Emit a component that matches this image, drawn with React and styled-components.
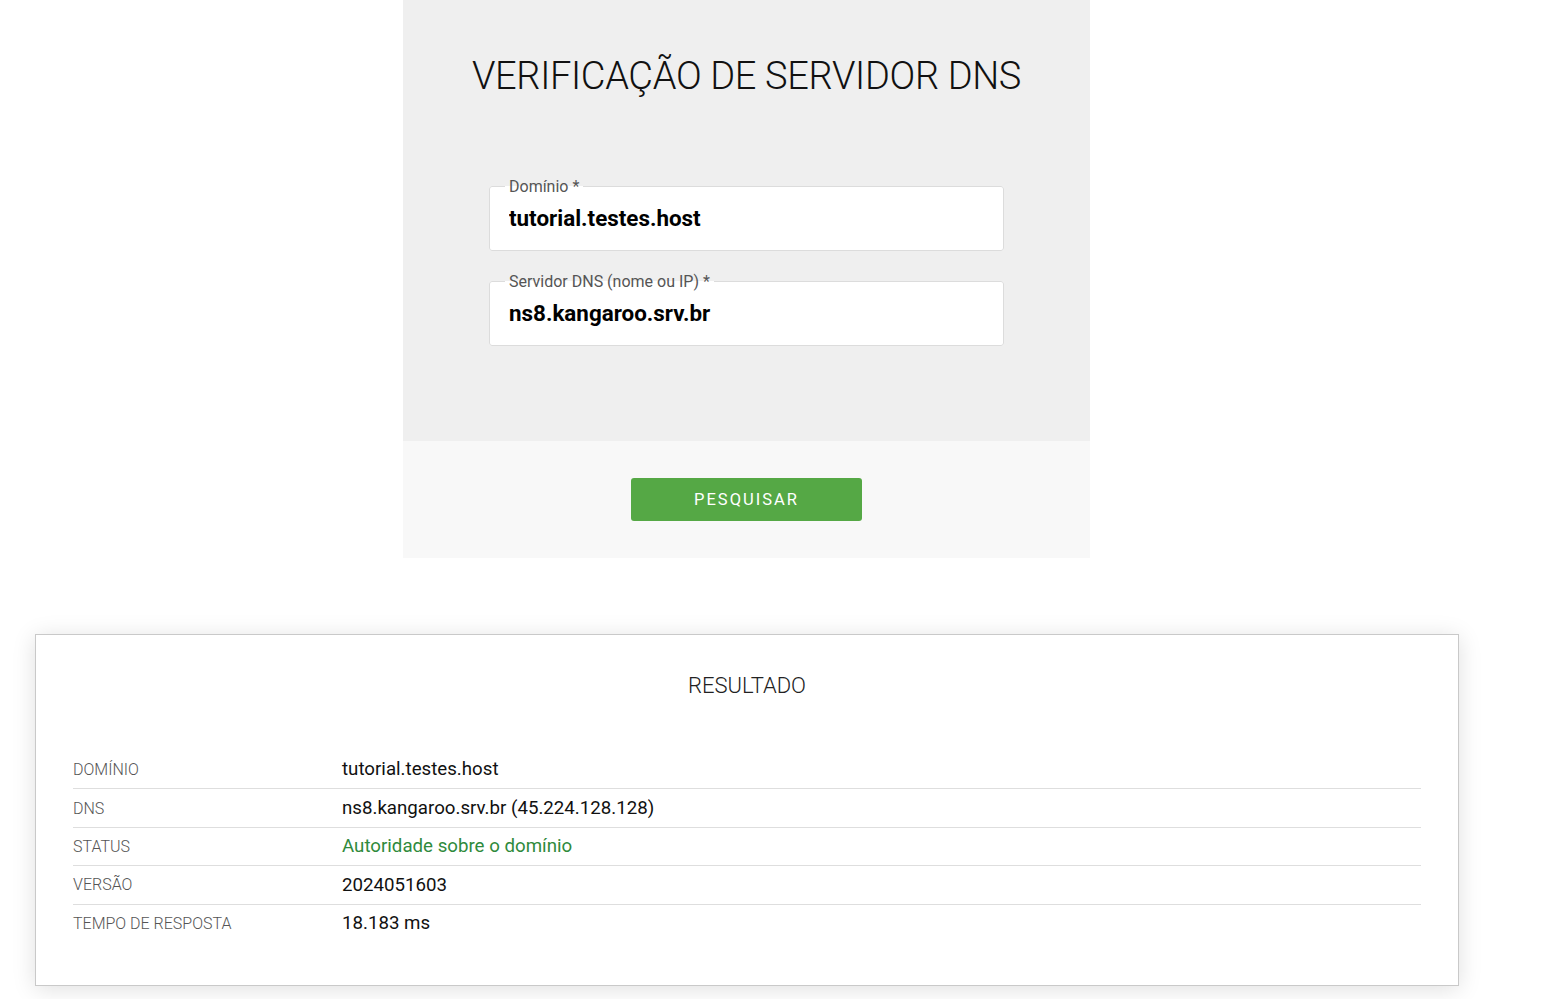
import React from "react";
import styled, { createGlobalStyle } from "styled-components";

const Global = createGlobalStyle`
  html, body { margin: 0; padding: 0; background: #fff; }
  body { font-family: Roboto, "Liberation Sans", Arial, sans-serif; color: #222; }
`;

const Page = styled.div`
  width: 1493px;
  display: flex;
  flex-direction: column;
  padding-bottom: 14px;
`;

const SearchPanel = styled.section`
  width: 687px;
  margin: 0 auto;
  display: flex;
  flex-direction: column;
`;

const FormArea = styled.div`
  background: #efefef;
  height: 441px;
  box-sizing: border-box;
  padding-top: 52px;
  display: flex;
  flex-direction: column;
  align-items: center;
`;

const Title = styled.h1`
  margin: 0 0 77px;
  font-size: 38px;
  font-weight: 300;
  line-height: 48px;
  text-align: center;
  color: #111;
  letter-spacing: -0.33px;
  white-space: nowrap;
`;

const Field = styled.fieldset`
  margin: 0 0 21px;
  padding: 0 20px 0 19px;
  width: 515px;
  height: 74px;
  box-sizing: border-box;
  border: 1px solid #dcdcdc;
  border-radius: 3px;
  background: #fff;
  min-width: 0;
`;

const Legend = styled.legend`
  padding: 0 4px;
  margin-left: -4px;
  font-size: 16px;
  line-height: 19px;
  color: #555;
`;

const Input = styled.input`
  display: block;
  border: 0;
  outline: none;
  width: 100%;
  height: 44px;
  padding: 0;
  margin: 0;
  background: transparent;
  font-family: inherit;
  font-size: 22.4px;
  font-weight: 700;
  color: #000;
`;

const ActionBar = styled.div`
  background: #f8f8f8;
  height: 117px;
  display: flex;
  align-items: center;
  justify-content: center;
`;

const Button = styled.button`
  width: 231px;
  height: 43px;
  border: 0;
  border-radius: 3px;
  background: #55a845;
  color: #fff;
  font-family: inherit;
  font-size: 16.5px;
  letter-spacing: 2px;
  text-transform: uppercase;
  cursor: pointer;
`;

const ResultCard = styled.section`
  margin: 76px 0 0 35px;
  width: 1424px;
  box-sizing: border-box;
  border: 1px solid #c9c9c9;
  background: #fff;
  box-shadow: 0 3px 22px rgba(0, 0, 0, 0.13);
  padding: 38px 37px 43px;
`;

const ResultTitle = styled.h2`
  margin: 0 0 51px;
  font-size: 22px;
  font-weight: 300;
  line-height: 26px;
  text-align: center;
  color: #222;
`;

const Table = styled.div`
  display: flex;
  flex-direction: column;
`;

const Row = styled.div`
  display: grid;
  grid-template-columns: 269px 1fr;
  align-items: center;
  box-sizing: border-box;
  height: 38.4px;
  border-top: ${(p) => (p.$first ? "none" : "1px solid #dedede")};
`;

const Label = styled.div`
  font-size: 16px;
  font-weight: 300;
  color: #555;
  text-transform: uppercase;
`;

const Value = styled.div`
  font-size: 18.7px;
  color: ${(p) => (p.$ok ? "#2f8a3c" : "#111")};
`;

const rows = [
  { label: "Domínio", value: "tutorial.testes.host" },
  { label: "DNS", value: "ns8.kangaroo.srv.br (45.224.128.128)" },
  { label: "Status", value: "Autoridade sobre o domínio", ok: true },
  { label: "Versão", value: "2024051603" },
  { label: "Tempo de resposta", value: "18.183 ms" },
];

export default function App() {
  return (
    <>
      <Global />
      <Page>
        <SearchPanel>
          <FormArea>
            <Title>VERIFICAÇÃO DE SERVIDOR DNS</Title>
            <Field>
              <Legend>Domínio *</Legend>
              <Input defaultValue="tutorial.testes.host" />
            </Field>
            <Field>
              <Legend>Servidor DNS (nome ou IP) *</Legend>
              <Input defaultValue="ns8.kangaroo.srv.br" />
            </Field>
          </FormArea>
          <ActionBar>
            <Button>Pesquisar</Button>
          </ActionBar>
        </SearchPanel>
        <ResultCard>
          <ResultTitle>RESULTADO</ResultTitle>
          <Table>
            {rows.map((r, i) => (
              <Row key={r.label} $first={i === 0}>
                <Label>{r.label}</Label>
                <Value $ok={r.ok}>{r.value}</Value>
              </Row>
            ))}
          </Table>
        </ResultCard>
      </Page>
    </>
  );
}
